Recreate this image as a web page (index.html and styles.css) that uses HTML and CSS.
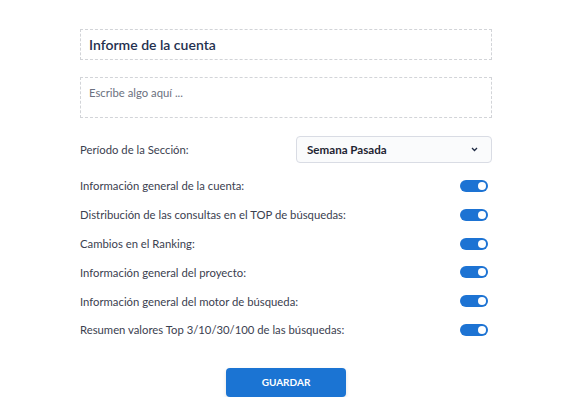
FILE: index.html
```html
<!DOCTYPE html>
<html lang="es">
<head>
<meta charset="utf-8">
<link rel="stylesheet" href="styles.css">
</head>
<body>
<div class="form">
  <div class="title-box">Informe de la cuenta</div>
  <div class="text-box">Escribe algo aquí ...</div>
  <div class="period-row">
    <span class="label">Período de la Sección:</span>
    <div class="select">
      <span>Semana Pasada</span>
      <svg class="chev" width="7" height="5" viewBox="0 0 7 5"><path d="M1 1 L3.5 3.5 L6 1" fill="none" stroke="#1f2a44" stroke-width="1.3"/></svg>
    </div>
  </div>
  <div class="toggles">
    <div class="row"><span class="label">Información general de la cuenta:</span><span class="toggle"></span></div>
    <div class="row"><span class="label">Distribución de las consultas en el TOP de búsquedas:</span><span class="toggle"></span></div>
    <div class="row"><span class="label">Cambios en el Ranking:</span><span class="toggle"></span></div>
    <div class="row"><span class="label">Información general del proyecto:</span><span class="toggle"></span></div>
    <div class="row"><span class="label">Información general del motor de búsqueda:</span><span class="toggle"></span></div>
    <div class="row"><span class="label">Resumen valores Top 3/10/30/100 de las búsquedas:</span><span class="toggle"></span></div>
  </div>
  <div class="actions"><button class="save">GUARDAR</button></div>
</div>
</body>
</html>
```
FILE: styles.css
```css
html, body { margin: 0; padding: 0; background: #ffffff; }
body { font-family: Lato, "Noto Sans", sans-serif; color: #3b4150; }
.form { width: 412px; margin: 0 0 0 80px; padding-top: 29px; display: flex; flex-direction: column; }
.title-box {
  height: 31px; box-sizing: border-box; border: 1px dashed #d2d4d8;
  padding: 0 8px; display: flex; align-items: center;
  font-size: 14px; font-weight: 600; color: #24304f;
}
.text-box {
  margin-top: 17px; height: 41px; box-sizing: border-box; border: 1px dashed #d2d4d8;
  padding: 8px 8px; font-size: 11.3px; color: #6b7180;
}
.period-row { margin-top: 18px; display: flex; align-items: center; justify-content: space-between; }
.label { font-size: 11.3px; color: #3b4150; }
.select {
  width: 196px; height: 27px; box-sizing: border-box; border: 1px solid #d9dce4; border-radius: 4px;
  background: #fafbfc; display: flex; align-items: center; justify-content: space-between;
  padding: 0 13px 0 10px; font-family: Lato, "Noto Sans", sans-serif; font-size: 11.6px; font-weight: 700; color: #1f2533;
}
.chev { display: block; }
.toggles { margin-top: 8.6px; display: flex; flex-direction: column; }
.row { height: 28.8px; display: flex; align-items: center; justify-content: space-between; }
.toggle {
  position: relative; width: 28px; height: 12px; border-radius: 6px; background: #1d73d3; margin-right: 4px;
}
.toggle::after {
  content: ""; position: absolute; right: 2px; top: 2px; width: 8px; height: 8px; border-radius: 50%; background: #ffffff;
}
.actions { margin-top: 23.6px; display: flex; justify-content: center; }
.save {
  width: 120px; height: 29px; border: none; border-radius: 4px; background: #1b74d3; color: #ffffff;
  font-family: Lato, "Noto Sans", sans-serif; font-size: 10px; font-weight: 700; box-shadow: 0 2px 4px rgba(0,0,0,0.12);
}
```
